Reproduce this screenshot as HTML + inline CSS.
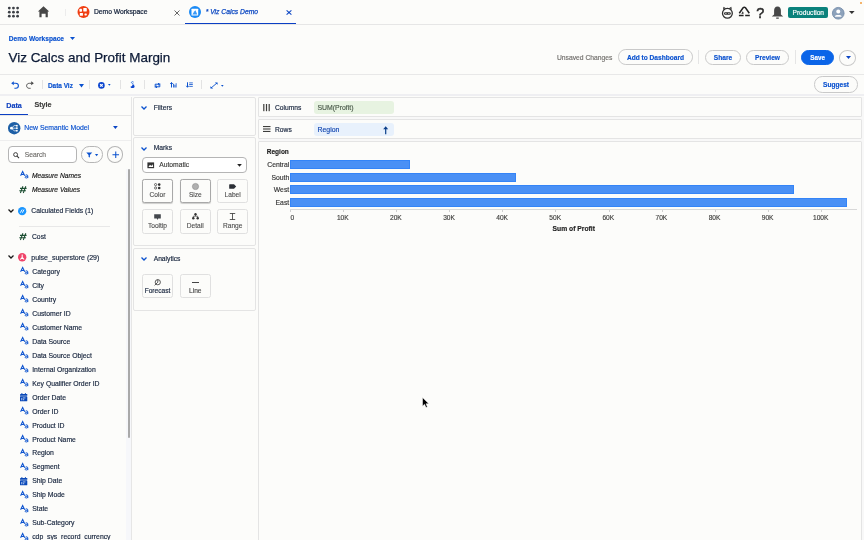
<!DOCTYPE html>
<html><head><meta charset="utf-8"><style>
html,body{margin:0;padding:0;}
body{width:864px;height:540px;overflow:hidden;position:relative;background:#fcfcfa;font-family:"Liberation Sans",sans-serif;}
.t{position:absolute;white-space:nowrap;-webkit-text-stroke:0.15px currentColor;}
#w{position:absolute;left:0;top:0;width:864px;height:540px;will-change:transform;}
svg{overflow:visible;}
</style></head><body><div id="w">
<div style="position:absolute;left:0px;top:23.5px;width:864px;height:1px;background:#e6e6e6;"></div>
<svg style="position:absolute;left:0;top:0" width="22" height="22" viewBox="0 0 22 22"><circle cx="9.30" cy="8.10" r="1.4" fill="#3b3f45"/><circle cx="9.30" cy="12.15" r="1.4" fill="#3b3f45"/><circle cx="9.30" cy="16.20" r="1.4" fill="#3b3f45"/><circle cx="13.45" cy="8.10" r="1.4" fill="#3b3f45"/><circle cx="13.45" cy="12.15" r="1.4" fill="#3b3f45"/><circle cx="13.45" cy="16.20" r="1.4" fill="#3b3f45"/><circle cx="17.60" cy="8.10" r="1.4" fill="#3b3f45"/><circle cx="17.60" cy="12.15" r="1.4" fill="#3b3f45"/><circle cx="17.60" cy="16.20" r="1.4" fill="#3b3f45"/></svg>
<svg style="position:absolute;left:37.5px;top:6.3px" width="12" height="12" viewBox="0 0 12 12"><path d="M5.5 0.3 L11.2 5.6 L9.8 5.6 L9.8 11.2 L7.6 11.2 L7.6 7.8 L3.6 7.8 L3.6 11.2 L1.4 11.2 L1.4 5.6 L-0.1 5.6 Z" fill="#474747"/></svg>
<div style="position:absolute;left:64.5px;top:8.5px;width:0.6px;height:7px;background:#ececec;"></div>
<svg style="position:absolute;left:77px;top:6px" width="13" height="12" viewBox="0 0 13 12"><circle cx="6.5" cy="6" r="6" fill="#f03e12"/><rect x="2.4" y="2.7" width="2.6" height="3" rx="0.7" fill="#fff"/><rect x="6.3" y="2.1" width="3.5" height="3.3" rx="0.4" fill="#fff"/><rect x="2.8" y="7" width="3.1" height="2.7" rx="0.3" fill="#fff"/><rect x="7.5" y="7.4" width="2.3" height="2" rx="0.6" fill="#fff"/></svg>
<div class="t" style="left:93.90px;top:8.69px;font-size:6.75px;line-height:6.75px;font-weight:400;color:#14223b;font-style:normal;-webkit-text-stroke:0.22px #14223b;">Demo Workspace</div>
<svg style="position:absolute;left:173.5px;top:9.5px" width="6" height="6" viewBox="0 0 6 6"><path d="M0.5 0.5 L5.5 5.5 M5.5 0.5 L0.5 5.5" stroke="#555" stroke-width="0.9"/></svg>
<div style="position:absolute;left:185px;top:22.6px;width:111px;height:1.6px;background:#0b3fc4;"></div>
<svg style="position:absolute;left:188.7px;top:6.2px" width="12" height="12" viewBox="0 0 12 12"><circle cx="6" cy="6" r="6" fill="#1a8af5"/><rect x="2.5" y="2.8" width="6.7" height="6.7" rx="0.5" fill="#fff"/><path d="M3.4 8.4 L5.2 5.6 L6.4 4.3 L8.3 8.4 Z" fill="#3b9af7"/></svg>
<div class="t" style="left:205.70px;top:8.69px;font-size:6.75px;line-height:6.75px;font-weight:400;color:#0d49c2;font-style:italic;-webkit-text-stroke:0.25px #0d49c2;">* Viz Calcs Demo</div>
<svg style="position:absolute;left:285.5px;top:10px" width="6" height="5" viewBox="0 0 6 5"><path d="M0.6 0.4 L5.4 4.6 M5.4 0.4 L0.6 4.6" stroke="#0b45c4" stroke-width="1.1"/></svg>
<svg style="position:absolute;left:721px;top:6px" width="13" height="13" viewBox="0 0 13 13"><circle cx="6.4" cy="7.3" r="4.9" fill="none" stroke="#2e2e2e" stroke-width="1.3"/><path d="M2.6 3.6 L2.9 1.6 L4.6 2.6 M10.2 3.6 L9.9 1.6 L8.2 2.6" stroke="#2e2e2e" stroke-width="1.1" fill="none"/><rect x="3" y="6.3" width="6.8" height="2.4" rx="1.2" fill="#2e2e2e"/><circle cx="4.9" cy="7.5" r="0.6" fill="#fff"/><circle cx="7.9" cy="7.5" r="0.6" fill="#fff"/></svg>
<svg style="position:absolute;left:738px;top:6px" width="13" height="12" viewBox="0 0 13 12"><path d="M1.3 7.2 L5.1 1.8 Q6.3 0.5 7.5 1.8 L11.3 7.2" stroke="#222" stroke-width="1.5" fill="none"/><path d="M0.9 9.6 L5.6 9.6 M7.2 9.6 L11.8 9.6" stroke="#222" stroke-width="1.5" fill="none"/><path d="M3.4 8 L4.8 5.2 L5.8 7.6 Z" fill="#222"/></svg>
<div class="t" style="left:756.20px;top:6.13px;font-size:14.5px;line-height:14.5px;font-weight:400;color:#2e2e2e;font-style:normal;-webkit-text-stroke:0.5px #2e2e2e;">?</div>
<svg style="position:absolute;left:771px;top:6px" width="13" height="13" viewBox="0 0 13 13"><path d="M6.5 0.6 C8.9 0.6 9.9 2.4 9.9 4.6 L9.9 8.6 L12.2 10.6 L0.8 10.6 L3.1 8.6 L3.1 4.6 C3.1 2.4 4.1 0.6 6.5 0.6 Z" fill="#474747"/><rect x="5" y="11.4" width="3" height="1.3" rx="0.65" fill="#474747"/></svg>
<div style="position:absolute;left:788px;top:6.6px;width:40.2px;height:11.3px;background:#0b827c;border-radius:2px;"></div>
<div class="t" style="left:792.50px;top:9.91px;font-size:6.6px;line-height:6.6px;font-weight:400;color:#fff;font-style:normal;">Production</div>
<svg style="position:absolute;left:832px;top:7px" width="12.5" height="12.5" viewBox="0 0 12 12"><circle cx="6" cy="6" r="5.6" fill="#8da2bb" stroke="#6f88a6" stroke-width="0.8"/><circle cx="6" cy="4.3" r="1.9" fill="#fff"/><path d="M2.8 9 C2.8 7.1 9.2 7.1 9.2 9 L9.2 9.4 L2.8 9.4 Z" fill="#fff"/></svg>
<svg style="position:absolute;left:849.2px;top:11.2px" width="5.6" height="3" viewBox="0 0 6 3"><path d="M0 0 L6 0 L3 3 Z" fill="#333"/></svg>
<div style="position:absolute;left:860px;top:1.5px;width:2px;height:2px;background:#f39c3c;border-radius:50%;"></div>
<div class="t" style="left:8.75px;top:35.81px;font-size:6.6px;line-height:6.6px;font-weight:700;color:#0b52cf;font-style:normal;">Demo Workspace</div>
<svg style="position:absolute;left:69.6px;top:37.2px" width="5" height="3" viewBox="0 0 5 3"><path d="M0 0 L5 0 L2.5 3 Z" fill="#0b52cf"/></svg>
<div class="t" style="left:8.50px;top:50.81px;font-size:13.45px;line-height:13.45px;font-weight:400;color:#0c1a36;font-style:normal;-webkit-text-stroke:0.25px #0c1a36;">Viz Calcs and Profit Margin</div>
<div class="t" style="left:556.90px;top:54.99px;font-size:6.75px;line-height:6.75px;font-weight:400;color:#706e6b;font-style:normal;">Unsaved Changes</div>
<div style="position:absolute;left:618px;top:49.3px;width:74.7px;height:15.6px;box-sizing:border-box;border:0.8px solid #c9c9c9;border-radius:7.8px;background:transparent;"></div>
<div class="t" style="left:626.90px;top:55.11px;font-size:6.6px;line-height:6.6px;font-weight:700;color:#0b52cf;font-style:normal;">Add to Dashboard</div>
<div style="position:absolute;left:698.3px;top:50px;width:0.7px;height:14px;background:#e5e5e5;"></div>
<div style="position:absolute;left:704.7px;top:49.5px;width:36px;height:15.7px;box-sizing:border-box;border:0.8px solid #c9c9c9;border-radius:7.85px;background:transparent;"></div>
<div class="t" style="left:713.80px;top:55.11px;font-size:6.6px;line-height:6.6px;font-weight:700;color:#0b52cf;font-style:normal;">Share</div>
<div style="position:absolute;left:746.4px;top:49.5px;width:42.3px;height:15.7px;box-sizing:border-box;border:0.8px solid #c9c9c9;border-radius:7.85px;background:transparent;"></div>
<div class="t" style="left:755.00px;top:55.11px;font-size:6.6px;line-height:6.6px;font-weight:700;color:#0b52cf;font-style:normal;">Preview</div>
<div style="position:absolute;left:794.5px;top:50px;width:0.7px;height:14px;background:#e5e5e5;"></div>
<div style="position:absolute;left:801.2px;top:49.5px;width:32.4px;height:15.7px;box-sizing:border-box;border:0.8px solid #0b65e8;border-radius:7.85px;background:#0b65e8;"></div>
<div class="t" style="left:810.20px;top:55.37px;font-size:6.3px;line-height:6.3px;font-weight:700;color:#fff;font-style:normal;">Save</div>
<div style="position:absolute;left:839.4px;top:50px;width:16.7px;height:15.5px;box-sizing:border-box;border:0.8px solid #c9c9c9;border-radius:50%;"></div>
<svg style="position:absolute;left:845.6px;top:56px" width="5" height="3" viewBox="0 0 5 3"><path d="M0 0 L5 0 L2.5 3 Z" fill="#0b45c4"/></svg>
<div style="position:absolute;left:0px;top:74.3px;width:864px;height:0.8px;background:#e8e8e8;"></div>
<div style="position:absolute;left:0px;top:93.8px;width:864px;height:2.4px;background:#efeff2;"></div>
<svg style="position:absolute;left:10.6px;top:81.2px" width="8" height="8" viewBox="0 0 8 8"><path d="M0.2 2.3 L2.8 0.3 L2.8 4.3 Z" fill="#0b52cf"/><path d="M2.4 2.3 L4.6 2.3 C6.4 2.3 7.4 3.4 7.4 4.8 C7.4 6.2 6.4 7.3 4.8 7.3 L3.4 7.3" stroke="#0b52cf" stroke-width="1.1" fill="none"/></svg>
<svg style="position:absolute;left:26.4px;top:81.2px" width="8" height="8" viewBox="0 0 8 8"><path d="M7.8 2.3 L5.2 0.3 L5.2 4.3 Z" fill="#444"/><path d="M5.6 2.3 L3.4 2.3 C1.6 2.3 0.6 3.4 0.6 4.8 C0.6 6.2 1.6 7.3 3.2 7.3 L4.6 7.3" stroke="#555" stroke-width="1" fill="none"/></svg>
<div style="position:absolute;left:42.2px;top:79.7px;width:0.6px;height:9.7px;background:#e3e3e3;"></div>
<div class="t" style="left:47.90px;top:82.93px;font-size:6.46px;line-height:6.46px;font-weight:700;color:#0b52cf;font-style:normal;">Data Viz</div>
<svg style="position:absolute;left:79.2px;top:83.6px" width="5" height="3.4" viewBox="0 0 5 3.4"><path d="M0 0 L5 0 L2.5 3.4 Z" fill="#0b52cf"/></svg>
<div style="position:absolute;left:89.4px;top:79.7px;width:0.6px;height:9.7px;background:#e3e3e3;"></div>
<svg style="position:absolute;left:98.3px;top:82.2px" width="6.8" height="6.8" viewBox="0 0 6.8 6.8"><circle cx="3.4" cy="3.4" r="3.3" fill="#0b45d0"/><path d="M2.1 2.1 L4.7 4.7 M4.7 2.1 L2.1 4.7" stroke="#fff" stroke-width="1.2"/></svg>
<svg style="position:absolute;left:108.4px;top:84.3px" width="2.6" height="1.8" viewBox="0 0 3 2"><path d="M0 0 L3 0 L1.5 2 Z" fill="#0b52cf"/></svg>
<div style="position:absolute;left:119.6px;top:79.7px;width:0.6px;height:9.7px;background:#e3e3e3;"></div>
<svg style="position:absolute;left:129.8px;top:81px" width="5" height="7.2" viewBox="0 0 5 7.2"><path d="M3.6 1.2 C3.2 0.4 1.4 0.5 1.4 1.5 C1.4 2.6 3.6 2.4 3.6 3.5" stroke="#3a7ae0" stroke-width="1" fill="none"/><path d="M2.2 3.6 C3.6 3.6 4.6 4.4 4.6 5.6 C4.6 6.8 3.6 7.1 2.4 7.1 C1.2 7.1 0.4 6.6 0.6 5.8 C1 5 2 5.6 2.2 4.8 Z" fill="#0b45d0"/></svg>
<div style="position:absolute;left:144.4px;top:79.7px;width:0.6px;height:9.7px;background:#e3e3e3;"></div>
<svg style="position:absolute;left:153.5px;top:82.5px" width="7" height="5" viewBox="0 0 7 5"><path d="M1.2 4.5 L1.2 1.2 L5 1.2 M4 0.2 L5.5 1.2 L4 2.2" stroke="#0b52cf" stroke-width="1" fill="none"/><path d="M5.8 0.5 L5.8 3.8 L2 3.8 M3 2.8 L1.5 3.8 L3 4.8" stroke="#0b52cf" stroke-width="1" fill="none"/></svg>
<svg style="position:absolute;left:170px;top:82.3px" width="6.5" height="5.5" viewBox="0 0 6.5 5.5"><path d="M1.5 5.5 L1.5 0.8 M0.3 2 L1.5 0.5 L2.7 2" stroke="#0b52cf" stroke-width="1" fill="none"/><rect x="3.2" y="1.8" width="0.9" height="3.7" fill="#0b52cf"/><rect x="4.5" y="2.8" width="0.9" height="2.7" fill="#0b52cf"/><rect x="5.7" y="1.2" width="0.8" height="4.3" fill="#0b52cf"/></svg>
<svg style="position:absolute;left:186px;top:82px" width="7" height="6" viewBox="0 0 7 6"><path d="M1.5 0.3 L1.5 5 M0.3 3.8 L1.5 5.3 L2.7 3.8" stroke="#0b52cf" stroke-width="1" fill="none"/><rect x="3.2" y="0.5" width="3.6" height="0.8" fill="#0b52cf"/><rect x="3.2" y="2.2" width="3.6" height="0.8" fill="#0b52cf"/><rect x="3.2" y="3.9" width="3.6" height="0.8" fill="#0b52cf"/></svg>
<div style="position:absolute;left:201.3px;top:79.7px;width:0.6px;height:9.7px;background:#e3e3e3;"></div>
<svg style="position:absolute;left:210px;top:82px" width="8" height="7" viewBox="0 0 8 7"><path d="M1 6 L7 1" stroke="#0b52cf" stroke-width="0.9"/><path d="M4.8 0.4 L7.6 0.4 L7.6 2.8 Z M0.4 4.2 L0.4 6.6 L3.2 6.6 Z" fill="#0b52cf"/></svg>
<svg style="position:absolute;left:220.5px;top:84.5px" width="2.6" height="1.8" viewBox="0 0 3 2"><path d="M0 0 L3 0 L1.5 2 Z" fill="#0b52cf"/></svg>
<div style="position:absolute;left:814.2px;top:76.2px;width:43.9px;height:16.5px;box-sizing:border-box;border:0.8px solid #c9c9c9;border-radius:8.25px;background:transparent;"></div>
<div class="t" style="left:823.00px;top:81.91px;font-size:6.6px;line-height:6.6px;font-weight:700;color:#0b52cf;font-style:normal;">Suggest</div>
<div style="position:absolute;left:0px;top:96.6px;width:131.2px;height:444px;background:#fcfcfa;"></div>
<div style="position:absolute;left:131.2px;top:96.6px;width:0.8px;height:444px;background:#e6e6e6;"></div>
<div class="t" style="left:6.20px;top:101.81px;font-size:7.2px;line-height:7.2px;font-weight:700;color:#0d3fbf;font-style:normal;">Data</div>
<div class="t" style="left:34.40px;top:101.85px;font-size:7.15px;line-height:7.15px;font-weight:700;color:#3e3e3c;font-style:normal;">Style</div>
<div style="position:absolute;left:0px;top:114.8px;width:131.2px;height:0.7px;background:#e6e6e6;"></div>
<div style="position:absolute;left:0px;top:113.6px;width:28px;height:1.9px;background:#0b3fc4;"></div>
<svg style="position:absolute;left:8px;top:121.5px" width="12.4" height="12.4" viewBox="0 0 12 12"><circle cx="6" cy="6" r="6" fill="#1d5fa6"/><circle cx="3.3" cy="6" r="1.3" fill="#fff"/><path d="M3.3 6 L6 3.5 L8.6 3.5 M3.3 6 L8.6 6 M3.3 6 L6 8.5 L8.6 8.5" stroke="#fff" stroke-width="0.7" fill="none"/><rect x="7.8" y="2.8" width="1.6" height="1.6" fill="#fff"/><rect x="7.8" y="5.2" width="1.6" height="1.6" fill="#fff"/><rect x="7.8" y="7.6" width="1.6" height="1.6" fill="#fff"/></svg>
<div class="t" style="left:24.30px;top:125.19px;font-size:6.86px;line-height:6.86px;font-weight:400;color:#0b52cf;font-style:normal;">New Semantic Model</div>
<svg style="position:absolute;left:113px;top:126.4px" width="4.8" height="3" viewBox="0 0 5 3"><path d="M0 0 L5 0 L2.5 3 Z" fill="#0b45c4"/></svg>
<div style="position:absolute;left:0px;top:140px;width:131.2px;height:0.7px;background:#eeeeee;"></div>
<div style="position:absolute;left:8.1px;top:146.2px;width:68.8px;height:16.5px;box-sizing:border-box;border:0.8px solid #b5b5b5;border-radius:4px;background:#fff;"></div>
<svg style="position:absolute;left:12.5px;top:151.5px" width="6.5" height="6.5" viewBox="0 0 7 7"><circle cx="2.8" cy="2.8" r="2.1" stroke="#333" stroke-width="1" fill="none"/><path d="M4.4 4.4 L6.5 6.5" stroke="#333" stroke-width="1.1"/></svg>
<div class="t" style="left:24.70px;top:152.09px;font-size:6.75px;line-height:6.75px;font-weight:400;color:#706e6b;font-style:normal;">Search</div>
<div style="position:absolute;left:80.9px;top:146.2px;width:21.9px;height:16.5px;box-sizing:border-box;border:0.8px solid #b5b5b5;border-radius:8.25px;"></div>
<svg style="position:absolute;left:86px;top:151.5px" width="6.5" height="6" viewBox="0 0 7 6"><path d="M0.3 0.3 L6.7 0.3 L4.2 3 L4.2 5.8 L2.8 5.2 L2.8 3 Z" fill="#0b52cf"/></svg>
<svg style="position:absolute;left:95.2px;top:153.6px" width="3.2" height="2.2" viewBox="0 0 3 2"><path d="M0 0 L3 0 L1.5 2 Z" fill="#0b52cf"/></svg>
<div style="position:absolute;left:107px;top:146.2px;width:16.4px;height:16.5px;box-sizing:border-box;border:0.8px solid #b5b5b5;border-radius:50%;"></div>
<svg style="position:absolute;left:111.5px;top:150.7px" width="7.5" height="7.5" viewBox="0 0 8 8"><path d="M4 0.5 L4 7.5 M0.5 4 L7.5 4" stroke="#0b52cf" stroke-width="1.1"/></svg>
<div style="position:absolute;left:126.4px;top:169px;width:5px;height:372px;background:#f6f7fa;"></div>
<div style="position:absolute;left:127.6px;top:169.3px;width:2.7px;height:268.5px;background:#a9a9a9;border-radius:1.3px;"></div>
<svg style="position:absolute;left:19.50px;top:170.80px" width="9" height="8" viewBox="0 0 9 8"><path d="M0.6 4.8 L2.65 0.5 L4.7 4.8 M1.3 3.5 L4 3.5" stroke="#0b52cf" stroke-width="1.05" fill="none"/><path d="M5.4 4.3 C5.9 3.6 7.8 3.5 7.8 5 L7.8 7.1 M7.7 5.5 C7.2 5.2 5.1 5.2 5.1 6.2 C5.1 7.3 7.2 7.2 7.8 6.3" stroke="#0b52cf" stroke-width="0.95" fill="none"/></svg>
<div class="t" style="left:32.00px;top:173.13px;font-size:6.7px;line-height:6.7px;font-weight:400;color:#181818;font-style:italic;">Measure Names</div>
<svg style="position:absolute;left:19.4px;top:185.7px" width="8" height="7.2" viewBox="0 0 8 7.2"><path d="M3.9 0.2 L1.4 7 M6.8 0.2 L4.3 7 M1 2.4 L7.6 2.4 M0.3 4.8 L6.9 4.8" stroke="#1d4f33" stroke-width="1.05" fill="none"/></svg>
<div class="t" style="left:32.00px;top:187.13px;font-size:6.7px;line-height:6.7px;font-weight:400;color:#181818;font-style:italic;">Measure Values</div>
<svg style="position:absolute;left:8.0px;top:208.8px" width="6" height="3.6" viewBox="0 0 6 3.6"><path d="M0.5 0.5 L3 3 L5.5 0.5" stroke="#181818" stroke-width="1.25" fill="none"/></svg>
<svg style="position:absolute;left:18.4px;top:206.7px" width="8.3" height="8.3" viewBox="0 0 8 8"><circle cx="4" cy="4" r="4" fill="#1b96ff"/><path d="M2.2 5.5 L4 2.5 M4.2 5.5 L5.8 2.5" stroke="#fff" stroke-width="0.9"/></svg>
<div class="t" style="left:31.25px;top:208.16px;font-size:6.78px;line-height:6.78px;font-weight:400;color:#14223b;font-style:normal;">Calculated Fields (1)</div>
<div style="position:absolute;left:19px;top:226px;width:91px;height:0.6px;background:#e8e8e8;"></div>
<svg style="position:absolute;left:19.4px;top:232.7px" width="8" height="7.2" viewBox="0 0 8 7.2"><path d="M3.9 0.2 L1.4 7 M6.8 0.2 L4.3 7 M1 2.4 L7.6 2.4 M0.3 4.8 L6.9 4.8" stroke="#1d4f33" stroke-width="1.05" fill="none"/></svg>
<div class="t" style="left:32.00px;top:233.59px;font-size:6.75px;line-height:6.75px;font-weight:400;color:#14223b;font-style:normal;">Cost</div>
<svg style="position:absolute;left:8.0px;top:255.2px" width="6" height="3.6" viewBox="0 0 6 3.6"><path d="M0.5 0.5 L3 3 L5.5 0.5" stroke="#181818" stroke-width="1.25" fill="none"/></svg>
<svg style="position:absolute;left:18.4px;top:252.8px" width="8.4" height="8.4" viewBox="0 0 8 8"><circle cx="4" cy="4" r="4" fill="#f0456a"/><path d="M4 1.5 L4 4.2 L2.2 6.2 M4 4.2 L5.8 6.2" stroke="#fff" stroke-width="1" fill="none"/></svg>
<div class="t" style="left:31.25px;top:254.37px;font-size:7.0px;line-height:7.0px;font-weight:400;color:#14223b;font-style:normal;">pulse_superstore (29)</div>
<svg style="position:absolute;left:19.60px;top:267.30px" width="9" height="8" viewBox="0 0 9 8"><path d="M0.6 4.8 L2.65 0.5 L4.7 4.8 M1.3 3.5 L4 3.5" stroke="#0b52cf" stroke-width="1.05" fill="none"/><path d="M5.4 4.3 C5.9 3.6 7.8 3.5 7.8 5 L7.8 7.1 M7.7 5.5 C7.2 5.2 5.1 5.2 5.1 6.2 C5.1 7.3 7.2 7.2 7.8 6.3" stroke="#0b52cf" stroke-width="0.95" fill="none"/></svg>
<div class="t" style="left:32.20px;top:269.00px;font-size:6.85px;line-height:6.85px;font-weight:400;color:#14223b;font-style:normal;">Category</div>
<svg style="position:absolute;left:19.60px;top:281.26px" width="9" height="8" viewBox="0 0 9 8"><path d="M0.6 4.8 L2.65 0.5 L4.7 4.8 M1.3 3.5 L4 3.5" stroke="#0b52cf" stroke-width="1.05" fill="none"/><path d="M5.4 4.3 C5.9 3.6 7.8 3.5 7.8 5 L7.8 7.1 M7.7 5.5 C7.2 5.2 5.1 5.2 5.1 6.2 C5.1 7.3 7.2 7.2 7.8 6.3" stroke="#0b52cf" stroke-width="0.95" fill="none"/></svg>
<div class="t" style="left:32.20px;top:282.96px;font-size:6.85px;line-height:6.85px;font-weight:400;color:#14223b;font-style:normal;">City</div>
<svg style="position:absolute;left:19.60px;top:295.22px" width="9" height="8" viewBox="0 0 9 8"><path d="M0.6 4.8 L2.65 0.5 L4.7 4.8 M1.3 3.5 L4 3.5" stroke="#0b52cf" stroke-width="1.05" fill="none"/><path d="M5.4 4.3 C5.9 3.6 7.8 3.5 7.8 5 L7.8 7.1 M7.7 5.5 C7.2 5.2 5.1 5.2 5.1 6.2 C5.1 7.3 7.2 7.2 7.8 6.3" stroke="#0b52cf" stroke-width="0.95" fill="none"/></svg>
<div class="t" style="left:32.20px;top:296.92px;font-size:6.85px;line-height:6.85px;font-weight:400;color:#14223b;font-style:normal;">Country</div>
<svg style="position:absolute;left:19.60px;top:309.18px" width="9" height="8" viewBox="0 0 9 8"><path d="M0.6 4.8 L2.65 0.5 L4.7 4.8 M1.3 3.5 L4 3.5" stroke="#0b52cf" stroke-width="1.05" fill="none"/><path d="M5.4 4.3 C5.9 3.6 7.8 3.5 7.8 5 L7.8 7.1 M7.7 5.5 C7.2 5.2 5.1 5.2 5.1 6.2 C5.1 7.3 7.2 7.2 7.8 6.3" stroke="#0b52cf" stroke-width="0.95" fill="none"/></svg>
<div class="t" style="left:32.20px;top:310.88px;font-size:6.85px;line-height:6.85px;font-weight:400;color:#14223b;font-style:normal;">Customer ID</div>
<svg style="position:absolute;left:19.60px;top:323.14px" width="9" height="8" viewBox="0 0 9 8"><path d="M0.6 4.8 L2.65 0.5 L4.7 4.8 M1.3 3.5 L4 3.5" stroke="#0b52cf" stroke-width="1.05" fill="none"/><path d="M5.4 4.3 C5.9 3.6 7.8 3.5 7.8 5 L7.8 7.1 M7.7 5.5 C7.2 5.2 5.1 5.2 5.1 6.2 C5.1 7.3 7.2 7.2 7.8 6.3" stroke="#0b52cf" stroke-width="0.95" fill="none"/></svg>
<div class="t" style="left:32.20px;top:324.84px;font-size:6.85px;line-height:6.85px;font-weight:400;color:#14223b;font-style:normal;">Customer Name</div>
<svg style="position:absolute;left:19.60px;top:337.10px" width="9" height="8" viewBox="0 0 9 8"><path d="M0.6 4.8 L2.65 0.5 L4.7 4.8 M1.3 3.5 L4 3.5" stroke="#0b52cf" stroke-width="1.05" fill="none"/><path d="M5.4 4.3 C5.9 3.6 7.8 3.5 7.8 5 L7.8 7.1 M7.7 5.5 C7.2 5.2 5.1 5.2 5.1 6.2 C5.1 7.3 7.2 7.2 7.8 6.3" stroke="#0b52cf" stroke-width="0.95" fill="none"/></svg>
<div class="t" style="left:32.20px;top:338.80px;font-size:6.85px;line-height:6.85px;font-weight:400;color:#14223b;font-style:normal;">Data Source</div>
<svg style="position:absolute;left:19.60px;top:351.06px" width="9" height="8" viewBox="0 0 9 8"><path d="M0.6 4.8 L2.65 0.5 L4.7 4.8 M1.3 3.5 L4 3.5" stroke="#0b52cf" stroke-width="1.05" fill="none"/><path d="M5.4 4.3 C5.9 3.6 7.8 3.5 7.8 5 L7.8 7.1 M7.7 5.5 C7.2 5.2 5.1 5.2 5.1 6.2 C5.1 7.3 7.2 7.2 7.8 6.3" stroke="#0b52cf" stroke-width="0.95" fill="none"/></svg>
<div class="t" style="left:32.20px;top:352.76px;font-size:6.85px;line-height:6.85px;font-weight:400;color:#14223b;font-style:normal;">Data Source Object</div>
<svg style="position:absolute;left:19.60px;top:365.02px" width="9" height="8" viewBox="0 0 9 8"><path d="M0.6 4.8 L2.65 0.5 L4.7 4.8 M1.3 3.5 L4 3.5" stroke="#0b52cf" stroke-width="1.05" fill="none"/><path d="M5.4 4.3 C5.9 3.6 7.8 3.5 7.8 5 L7.8 7.1 M7.7 5.5 C7.2 5.2 5.1 5.2 5.1 6.2 C5.1 7.3 7.2 7.2 7.8 6.3" stroke="#0b52cf" stroke-width="0.95" fill="none"/></svg>
<div class="t" style="left:32.20px;top:366.72px;font-size:6.85px;line-height:6.85px;font-weight:400;color:#14223b;font-style:normal;">Internal Organization</div>
<svg style="position:absolute;left:19.60px;top:378.98px" width="9" height="8" viewBox="0 0 9 8"><path d="M0.6 4.8 L2.65 0.5 L4.7 4.8 M1.3 3.5 L4 3.5" stroke="#0b52cf" stroke-width="1.05" fill="none"/><path d="M5.4 4.3 C5.9 3.6 7.8 3.5 7.8 5 L7.8 7.1 M7.7 5.5 C7.2 5.2 5.1 5.2 5.1 6.2 C5.1 7.3 7.2 7.2 7.8 6.3" stroke="#0b52cf" stroke-width="0.95" fill="none"/></svg>
<div class="t" style="left:32.20px;top:380.68px;font-size:6.85px;line-height:6.85px;font-weight:400;color:#14223b;font-style:normal;">Key Qualifier Order ID</div>
<svg style="position:absolute;left:19.80px;top:392.74px" width="7.4" height="8.4" viewBox="0 0 7.4 8.4"><rect x="0" y="1.1" width="7.3" height="1.7" rx="0.4" fill="#0b49b8"/><rect x="0" y="3.3" width="7.3" height="5" rx="0.6" fill="#0b49b8"/><rect x="1.3" y="0.2" width="1.1" height="1" fill="#0b49b8"/><rect x="4.9" y="0.2" width="1.1" height="1" fill="#0b49b8"/><rect x="1.3" y="4.9" width="1" height="2.4" fill="#b8cdf0"/><rect x="2.9" y="4.5" width="2.6" height="0.9" fill="#b8cdf0"/><rect x="3.2" y="5.8" width="1" height="1.5" fill="#b8cdf0"/></svg>
<div class="t" style="left:32.20px;top:394.64px;font-size:6.85px;line-height:6.85px;font-weight:400;color:#14223b;font-style:normal;">Order Date</div>
<svg style="position:absolute;left:19.60px;top:406.90px" width="9" height="8" viewBox="0 0 9 8"><path d="M0.6 4.8 L2.65 0.5 L4.7 4.8 M1.3 3.5 L4 3.5" stroke="#0b52cf" stroke-width="1.05" fill="none"/><path d="M5.4 4.3 C5.9 3.6 7.8 3.5 7.8 5 L7.8 7.1 M7.7 5.5 C7.2 5.2 5.1 5.2 5.1 6.2 C5.1 7.3 7.2 7.2 7.8 6.3" stroke="#0b52cf" stroke-width="0.95" fill="none"/></svg>
<div class="t" style="left:32.20px;top:408.60px;font-size:6.85px;line-height:6.85px;font-weight:400;color:#14223b;font-style:normal;">Order ID</div>
<svg style="position:absolute;left:19.60px;top:420.86px" width="9" height="8" viewBox="0 0 9 8"><path d="M0.6 4.8 L2.65 0.5 L4.7 4.8 M1.3 3.5 L4 3.5" stroke="#0b52cf" stroke-width="1.05" fill="none"/><path d="M5.4 4.3 C5.9 3.6 7.8 3.5 7.8 5 L7.8 7.1 M7.7 5.5 C7.2 5.2 5.1 5.2 5.1 6.2 C5.1 7.3 7.2 7.2 7.8 6.3" stroke="#0b52cf" stroke-width="0.95" fill="none"/></svg>
<div class="t" style="left:32.20px;top:422.56px;font-size:6.85px;line-height:6.85px;font-weight:400;color:#14223b;font-style:normal;">Product ID</div>
<svg style="position:absolute;left:19.60px;top:434.82px" width="9" height="8" viewBox="0 0 9 8"><path d="M0.6 4.8 L2.65 0.5 L4.7 4.8 M1.3 3.5 L4 3.5" stroke="#0b52cf" stroke-width="1.05" fill="none"/><path d="M5.4 4.3 C5.9 3.6 7.8 3.5 7.8 5 L7.8 7.1 M7.7 5.5 C7.2 5.2 5.1 5.2 5.1 6.2 C5.1 7.3 7.2 7.2 7.8 6.3" stroke="#0b52cf" stroke-width="0.95" fill="none"/></svg>
<div class="t" style="left:32.20px;top:436.52px;font-size:6.85px;line-height:6.85px;font-weight:400;color:#14223b;font-style:normal;">Product Name</div>
<svg style="position:absolute;left:19.60px;top:448.78px" width="9" height="8" viewBox="0 0 9 8"><path d="M0.6 4.8 L2.65 0.5 L4.7 4.8 M1.3 3.5 L4 3.5" stroke="#0b52cf" stroke-width="1.05" fill="none"/><path d="M5.4 4.3 C5.9 3.6 7.8 3.5 7.8 5 L7.8 7.1 M7.7 5.5 C7.2 5.2 5.1 5.2 5.1 6.2 C5.1 7.3 7.2 7.2 7.8 6.3" stroke="#0b52cf" stroke-width="0.95" fill="none"/></svg>
<div class="t" style="left:32.20px;top:450.48px;font-size:6.85px;line-height:6.85px;font-weight:400;color:#14223b;font-style:normal;">Region</div>
<svg style="position:absolute;left:19.60px;top:462.74px" width="9" height="8" viewBox="0 0 9 8"><path d="M0.6 4.8 L2.65 0.5 L4.7 4.8 M1.3 3.5 L4 3.5" stroke="#0b52cf" stroke-width="1.05" fill="none"/><path d="M5.4 4.3 C5.9 3.6 7.8 3.5 7.8 5 L7.8 7.1 M7.7 5.5 C7.2 5.2 5.1 5.2 5.1 6.2 C5.1 7.3 7.2 7.2 7.8 6.3" stroke="#0b52cf" stroke-width="0.95" fill="none"/></svg>
<div class="t" style="left:32.20px;top:464.44px;font-size:6.85px;line-height:6.85px;font-weight:400;color:#14223b;font-style:normal;">Segment</div>
<svg style="position:absolute;left:19.80px;top:476.50px" width="7.4" height="8.4" viewBox="0 0 7.4 8.4"><rect x="0" y="1.1" width="7.3" height="1.7" rx="0.4" fill="#0b49b8"/><rect x="0" y="3.3" width="7.3" height="5" rx="0.6" fill="#0b49b8"/><rect x="1.3" y="0.2" width="1.1" height="1" fill="#0b49b8"/><rect x="4.9" y="0.2" width="1.1" height="1" fill="#0b49b8"/><rect x="1.3" y="4.9" width="1" height="2.4" fill="#b8cdf0"/><rect x="2.9" y="4.5" width="2.6" height="0.9" fill="#b8cdf0"/><rect x="3.2" y="5.8" width="1" height="1.5" fill="#b8cdf0"/></svg>
<div class="t" style="left:32.20px;top:478.40px;font-size:6.85px;line-height:6.85px;font-weight:400;color:#14223b;font-style:normal;">Ship Date</div>
<svg style="position:absolute;left:19.60px;top:490.66px" width="9" height="8" viewBox="0 0 9 8"><path d="M0.6 4.8 L2.65 0.5 L4.7 4.8 M1.3 3.5 L4 3.5" stroke="#0b52cf" stroke-width="1.05" fill="none"/><path d="M5.4 4.3 C5.9 3.6 7.8 3.5 7.8 5 L7.8 7.1 M7.7 5.5 C7.2 5.2 5.1 5.2 5.1 6.2 C5.1 7.3 7.2 7.2 7.8 6.3" stroke="#0b52cf" stroke-width="0.95" fill="none"/></svg>
<div class="t" style="left:32.20px;top:492.36px;font-size:6.85px;line-height:6.85px;font-weight:400;color:#14223b;font-style:normal;">Ship Mode</div>
<svg style="position:absolute;left:19.60px;top:504.62px" width="9" height="8" viewBox="0 0 9 8"><path d="M0.6 4.8 L2.65 0.5 L4.7 4.8 M1.3 3.5 L4 3.5" stroke="#0b52cf" stroke-width="1.05" fill="none"/><path d="M5.4 4.3 C5.9 3.6 7.8 3.5 7.8 5 L7.8 7.1 M7.7 5.5 C7.2 5.2 5.1 5.2 5.1 6.2 C5.1 7.3 7.2 7.2 7.8 6.3" stroke="#0b52cf" stroke-width="0.95" fill="none"/></svg>
<div class="t" style="left:32.20px;top:506.32px;font-size:6.85px;line-height:6.85px;font-weight:400;color:#14223b;font-style:normal;">State</div>
<svg style="position:absolute;left:19.60px;top:518.58px" width="9" height="8" viewBox="0 0 9 8"><path d="M0.6 4.8 L2.65 0.5 L4.7 4.8 M1.3 3.5 L4 3.5" stroke="#0b52cf" stroke-width="1.05" fill="none"/><path d="M5.4 4.3 C5.9 3.6 7.8 3.5 7.8 5 L7.8 7.1 M7.7 5.5 C7.2 5.2 5.1 5.2 5.1 6.2 C5.1 7.3 7.2 7.2 7.8 6.3" stroke="#0b52cf" stroke-width="0.95" fill="none"/></svg>
<div class="t" style="left:32.20px;top:520.28px;font-size:6.85px;line-height:6.85px;font-weight:400;color:#14223b;font-style:normal;">Sub-Category</div>
<svg style="position:absolute;left:19.60px;top:532.54px" width="9" height="8" viewBox="0 0 9 8"><path d="M0.6 4.8 L2.65 0.5 L4.7 4.8 M1.3 3.5 L4 3.5" stroke="#0b52cf" stroke-width="1.05" fill="none"/><path d="M5.4 4.3 C5.9 3.6 7.8 3.5 7.8 5 L7.8 7.1 M7.7 5.5 C7.2 5.2 5.1 5.2 5.1 6.2 C5.1 7.3 7.2 7.2 7.8 6.3" stroke="#0b52cf" stroke-width="0.95" fill="none"/></svg>
<div class="t" style="left:32.20px;top:534.24px;font-size:6.85px;line-height:6.85px;font-weight:400;color:#14223b;font-style:normal;">cdp_sys_record_currency</div>
<div style="position:absolute;left:132px;top:96.6px;width:126px;height:444px;background:#fcfcfa;"></div>
<div style="position:absolute;left:133.4px;top:97px;width:123px;height:39px;box-sizing:border-box;border:0.8px solid #e4e4e4;border-radius:2px;background:#fcfcfa;"></div>
<svg style="position:absolute;left:141px;top:106.2px" width="6" height="3.6" viewBox="0 0 6 3.6"><path d="M0.5 0.5 L3 3 L5.5 0.5" stroke="#0b52cf" stroke-width="1.3" fill="none"/></svg>
<div class="t" style="left:153.80px;top:105.03px;font-size:6.7px;line-height:6.7px;font-weight:400;color:#14223b;font-style:normal;">Filters</div>
<div style="position:absolute;left:133.4px;top:137px;width:123px;height:109px;box-sizing:border-box;border:0.8px solid #e4e4e4;border-radius:2px;background:#fcfcfa;"></div>
<svg style="position:absolute;left:141px;top:146.6px" width="6" height="3.6" viewBox="0 0 6 3.6"><path d="M0.5 0.5 L3 3 L5.5 0.5" stroke="#0b52cf" stroke-width="1.3" fill="none"/></svg>
<div class="t" style="left:153.80px;top:145.13px;font-size:6.7px;line-height:6.7px;font-weight:400;color:#14223b;font-style:normal;">Marks</div>
<div style="position:absolute;left:142.2px;top:157px;width:105.3px;height:15.5px;box-sizing:border-box;border:0.8px solid #b5b5b5;border-radius:4px;background:#fff;"></div>
<svg style="position:absolute;left:146.7px;top:161.7px" width="7.5" height="6.6" viewBox="0 0 7.5 6.6"><rect x="0.4" y="0.4" width="6.7" height="5.8" fill="#333" /><path d="M1.4 5 L3 2.8 L4.4 4 L5.6 2.2 L6.2 5 Z" fill="#fff"/></svg>
<div class="t" style="left:159.20px;top:162.29px;font-size:6.74px;line-height:6.74px;font-weight:400;color:#3e3e3c;font-style:normal;">Automatic</div>
<svg style="position:absolute;left:236.7px;top:164.2px" width="5" height="2.8" viewBox="0 0 5 3"><path d="M0 0 L5 0 L2.5 3 Z" fill="#222"/></svg>
<div style="position:absolute;left:142.2px;top:178.7px;width:30.6px;height:24.5px;box-sizing:border-box;border:0.8px solid #a8a8a8;border-radius:2.5px;background:#fcfcfa;box-shadow:0 0.6px 0.8px rgba(0,0,0,0.18);"></div>
<svg style="position:absolute;left:154px;top:183.4px" width="7" height="6.6" viewBox="0 0 7 6.6"><circle cx="1.6" cy="1.6" r="1.1" stroke="#333" stroke-width="0.7" fill="none"/><circle cx="5.2" cy="1.6" r="1.3" fill="#333"/><circle cx="1.6" cy="5" r="1.1" stroke="#333" stroke-width="0.7" fill="none"/><circle cx="5.2" cy="5" r="1.3" fill="#333"/></svg>
<div class="t" style="left:142.2px;width:30.6px;text-align:center;top:192.31px;font-size:6.6px;line-height:6.6px;color:#4a4a4a;-webkit-text-stroke:0.1px #4a4a4a">Color</div>
<div style="position:absolute;left:180px;top:178.7px;width:30.6px;height:24.5px;box-sizing:border-box;border:0.8px solid #a8a8a8;border-radius:2.5px;background:#fcfcfa;box-shadow:0 0.6px 0.8px rgba(0,0,0,0.18);"></div>
<svg style="position:absolute;left:191.6px;top:183.3px" width="7" height="7" viewBox="0 0 7 7"><circle cx="3.5" cy="3.5" r="3.1" fill="#b0b0b0" stroke="#8a8a8a" stroke-width="0.6"/></svg>
<div class="t" style="left:180px;width:30.6px;text-align:center;top:192.31px;font-size:6.6px;line-height:6.6px;color:#4a4a4a;-webkit-text-stroke:0.1px #4a4a4a">Size</div>
<div style="position:absolute;left:217.4px;top:178.7px;width:30.6px;height:24.5px;box-sizing:border-box;border:0.8px solid #e0e0e0;border-radius:2.5px;background:#fcfcfa;"></div>
<svg style="position:absolute;left:228.8px;top:183.8px" width="7.4" height="5" viewBox="0 0 7.4 5"><path d="M0.8 0.2 L5 0.2 L7.2 2.5 L5 4.8 L0.8 4.8 Q0.2 4.8 0.2 4.2 L0.2 0.8 Q0.2 0.2 0.8 0.2 Z" fill="#2b2f36"/></svg>
<div class="t" style="left:217.4px;width:30.6px;text-align:center;top:192.31px;font-size:6.6px;line-height:6.6px;color:#4a4a4a;-webkit-text-stroke:0.1px #4a4a4a">Label</div>
<div style="position:absolute;left:142.2px;top:209.2px;width:30.6px;height:24.5px;box-sizing:border-box;border:0.8px solid #e0e0e0;border-radius:2.5px;background:#fcfcfa;"></div>
<svg style="position:absolute;left:154px;top:213.6px" width="7" height="6.2" viewBox="0 0 7 6.2"><path d="M0.2 0.2 L6.8 0.2 L6.8 4.6 L4.2 4.6 L3.5 6 L2.8 4.6 L0.2 4.6 Z" fill="#43474d"/></svg>
<div class="t" style="left:142.2px;width:30.6px;text-align:center;top:222.81px;font-size:6.6px;line-height:6.6px;color:#4a4a4a;-webkit-text-stroke:0.1px #4a4a4a">Tooltip</div>
<div style="position:absolute;left:180px;top:209.2px;width:30.6px;height:24.5px;box-sizing:border-box;border:0.8px solid #e0e0e0;border-radius:2.5px;background:#fcfcfa;"></div>
<svg style="position:absolute;left:191.6px;top:213.4px" width="7" height="6.6" viewBox="0 0 7 6.6"><circle cx="3.5" cy="1.3" r="1.2" fill="#333"/><circle cx="1.3" cy="5.2" r="1.2" fill="#333"/><circle cx="5.7" cy="5.2" r="1.2" fill="#333"/><path d="M3.5 1.3 L3.5 3.2 L1.3 3.2 L1.3 5.2 M3.5 3.2 L5.7 3.2 L5.7 5.2" stroke="#333" stroke-width="0.7" fill="none"/></svg>
<div class="t" style="left:180px;width:30.6px;text-align:center;top:222.81px;font-size:6.6px;line-height:6.6px;color:#4a4a4a;-webkit-text-stroke:0.1px #4a4a4a">Detail</div>
<div style="position:absolute;left:217.4px;top:209.2px;width:30.6px;height:24.5px;box-sizing:border-box;border:0.8px solid #e0e0e0;border-radius:2.5px;background:#fcfcfa;"></div>
<svg style="position:absolute;left:229.4px;top:213.2px" width="7" height="7" viewBox="0 0 7 7"><path d="M0.8 0.5 L6.2 0.5 M0.8 6.5 L6.2 6.5 M3.5 0.5 L3.5 6.5" stroke="#333" stroke-width="0.8"/></svg>
<div class="t" style="left:217.4px;width:30.6px;text-align:center;top:222.81px;font-size:6.6px;line-height:6.6px;color:#4a4a4a;-webkit-text-stroke:0.1px #4a4a4a">Range</div>
<div style="position:absolute;left:133.4px;top:248px;width:123px;height:63px;box-sizing:border-box;border:0.8px solid #e4e4e4;border-radius:2px;background:#fcfcfa;"></div>
<svg style="position:absolute;left:141px;top:256.7px" width="6" height="3.6" viewBox="0 0 6 3.6"><path d="M0.5 0.5 L3 3 L5.5 0.5" stroke="#0b52cf" stroke-width="1.3" fill="none"/></svg>
<div class="t" style="left:153.70px;top:255.73px;font-size:6.7px;line-height:6.7px;font-weight:400;color:#14223b;font-style:normal;">Analytics</div>
<div style="position:absolute;left:142.2px;top:273.7px;width:30.6px;height:24.3px;box-sizing:border-box;border:0.8px solid #e0e0e0;border-radius:2.5px;"></div>
<svg style="position:absolute;left:153.8px;top:278.6px" width="7" height="7" viewBox="0 0 7 7"><circle cx="3.8" cy="3.2" r="2.6" stroke="#333" stroke-width="0.8" fill="none"/><path d="M3.8 3.2 L3.8 0.6 M3.8 3.2 L0.6 6.4" stroke="#333" stroke-width="0.8"/></svg>
<div class="t" style="left:142.2px;width:30.6px;text-align:center;top:287.71px;font-size:6.6px;line-height:6.6px;color:#14223b">Forecast</div>
<div style="position:absolute;left:180px;top:273.7px;width:30.6px;height:24.3px;box-sizing:border-box;border:0.8px solid #e0e0e0;border-radius:2.5px;"></div>
<div style="position:absolute;left:191.5px;top:282px;width:7px;height:1px;background:#444;"></div>
<div class="t" style="left:180px;width:30.6px;text-align:center;top:287.71px;font-size:6.6px;line-height:6.6px;color:#4a4a4a">Line</div>
<div style="position:absolute;left:258px;top:96.6px;width:606px;height:444px;background:#f8f8f8;"></div>
<div style="position:absolute;left:258px;top:97px;width:604px;height:20px;box-sizing:border-box;border:0.8px solid #e4e4e4;border-radius:1px;background:#fcfcfa;"></div>
<svg style="position:absolute;left:262.8px;top:103.6px" width="7" height="7.2" viewBox="0 0 7 7.2"><rect x="0.2" y="0" width="1.2" height="7.2" fill="#3e3e3c"/><rect x="2.9" y="0" width="1.2" height="7.2" fill="#3e3e3c"/><rect x="5.6" y="0" width="1.2" height="7.2" fill="#3e3e3c"/></svg>
<div class="t" style="left:275.00px;top:104.73px;font-size:6.7px;line-height:6.7px;font-weight:400;color:#14223b;font-style:normal;">Columns</div>
<div style="position:absolute;left:313.7px;top:100.7px;width:80.2px;height:13.5px;background:#e7f3e1;border-radius:3px;"></div>
<div class="t" style="left:317.50px;top:104.56px;font-size:6.9px;line-height:6.9px;font-weight:400;color:#4a5a4a;font-style:normal;">SUM(Profit)</div>
<div style="position:absolute;left:258px;top:119px;width:604px;height:20px;box-sizing:border-box;border:0.8px solid #e4e4e4;border-radius:1px;background:#fcfcfa;"></div>
<svg style="position:absolute;left:262.8px;top:126.3px" width="7.5" height="6" viewBox="0 0 7.5 6"><rect x="0" y="0" width="7.5" height="1.1" fill="#3e3e3c"/><rect x="0" y="2.45" width="7.5" height="1.1" fill="#3e3e3c"/><rect x="0" y="4.9" width="7.5" height="1.1" fill="#3e3e3c"/></svg>
<div class="t" style="left:275.00px;top:127.13px;font-size:6.7px;line-height:6.7px;font-weight:400;color:#14223b;font-style:normal;">Rows</div>
<div style="position:absolute;left:313.7px;top:122.7px;width:80.2px;height:13.6px;background:#e8f1fc;border-radius:3px;"></div>
<div class="t" style="left:317.50px;top:126.96px;font-size:6.9px;line-height:6.9px;font-weight:400;color:#1146b0;font-style:normal;">Region</div>
<svg style="position:absolute;left:383px;top:125.8px" width="5.4" height="8.2" viewBox="0 0 5.4 8.2"><path d="M2.7 2.5 L2.7 8.2" stroke="#0b3f8a" stroke-width="1.2" fill="none"/><path d="M0.2 3.2 L2.7 0.2 L5.2 3.2 Z" fill="#0b3f8a"/></svg>
<div style="position:absolute;left:258px;top:141px;width:604px;height:400px;box-sizing:border-box;border:0.8px solid #e4e4e4;border-radius:1px;background:#fcfcfa;"></div>
<div class="t" style="left:266.80px;top:149.10px;font-size:6.5px;line-height:6.5px;font-weight:700;color:#222;font-style:normal;">Region</div>
<div style="position:absolute;left:290.2px;top:160px;width:120.00599999999999px;height:9px;box-sizing:border-box;background:#4a90f5;border:0.7px solid #3484f7;"></div>
<div class="t" style="left:230px;width:59.2px;text-align:right;top:162.14px;font-size:6.8px;line-height:6.8px;color:#333">Central</div>
<div style="position:absolute;left:290.2px;top:172.6px;width:225.94050000000001px;height:9px;box-sizing:border-box;background:#4a90f5;border:0.7px solid #3484f7;"></div>
<div class="t" style="left:230px;width:59.2px;text-align:right;top:174.74px;font-size:6.8px;line-height:6.8px;color:#333">South</div>
<div style="position:absolute;left:290.2px;top:185.2px;width:503.38800000000003px;height:9px;box-sizing:border-box;background:#4a90f5;border:0.7px solid #3484f7;"></div>
<div class="t" style="left:230px;width:59.2px;text-align:right;top:187.34px;font-size:6.8px;line-height:6.8px;color:#333">West</div>
<div style="position:absolute;left:290.2px;top:198.2px;width:556.7535px;height:9px;box-sizing:border-box;background:#4a90f5;border:0.7px solid #3484f7;"></div>
<div class="t" style="left:230px;width:59.2px;text-align:right;top:200.34px;font-size:6.8px;line-height:6.8px;color:#333">East</div>
<div style="position:absolute;left:290.2px;top:209px;width:567.2px;height:0.8px;background:#d8d8d8;"></div>
<div style="position:absolute;left:289.9px;top:209.5px;width:0.6px;height:2.2px;background:#d0d0d0;"></div>
<div class="t" style="left:290.60px;top:214.81px;font-size:6.6px;line-height:6.6px;font-weight:400;color:#3e3e3c;font-style:normal;">0</div>
<div style="position:absolute;left:343.0px;top:209.5px;width:0.6px;height:2.2px;background:#d0d0d0;"></div>
<div class="t" style="left:322.8px;width:40px;text-align:center;top:215.11px;font-size:6.6px;line-height:6.6px;color:#3e3e3c">10K</div>
<div style="position:absolute;left:396.09999999999997px;top:209.5px;width:0.6px;height:2.2px;background:#d0d0d0;"></div>
<div class="t" style="left:375.9px;width:40px;text-align:center;top:215.11px;font-size:6.6px;line-height:6.6px;color:#3e3e3c">20K</div>
<div style="position:absolute;left:449.2px;top:209.5px;width:0.6px;height:2.2px;background:#d0d0d0;"></div>
<div class="t" style="left:429.0px;width:40px;text-align:center;top:215.11px;font-size:6.6px;line-height:6.6px;color:#3e3e3c">30K</div>
<div style="position:absolute;left:502.3px;top:209.5px;width:0.6px;height:2.2px;background:#d0d0d0;"></div>
<div class="t" style="left:482.1px;width:40px;text-align:center;top:215.11px;font-size:6.6px;line-height:6.6px;color:#3e3e3c">40K</div>
<div style="position:absolute;left:555.4000000000001px;top:209.5px;width:0.6px;height:2.2px;background:#d0d0d0;"></div>
<div class="t" style="left:535.2px;width:40px;text-align:center;top:215.11px;font-size:6.6px;line-height:6.6px;color:#3e3e3c">50K</div>
<div style="position:absolute;left:608.5px;top:209.5px;width:0.6px;height:2.2px;background:#d0d0d0;"></div>
<div class="t" style="left:588.3px;width:40px;text-align:center;top:215.11px;font-size:6.6px;line-height:6.6px;color:#3e3e3c">60K</div>
<div style="position:absolute;left:661.6px;top:209.5px;width:0.6px;height:2.2px;background:#d0d0d0;"></div>
<div class="t" style="left:641.4px;width:40px;text-align:center;top:215.11px;font-size:6.6px;line-height:6.6px;color:#3e3e3c">70K</div>
<div style="position:absolute;left:714.7px;top:209.5px;width:0.6px;height:2.2px;background:#d0d0d0;"></div>
<div class="t" style="left:694.5px;width:40px;text-align:center;top:215.11px;font-size:6.6px;line-height:6.6px;color:#3e3e3c">80K</div>
<div style="position:absolute;left:767.8000000000001px;top:209.5px;width:0.6px;height:2.2px;background:#d0d0d0;"></div>
<div class="t" style="left:747.6px;width:40px;text-align:center;top:215.11px;font-size:6.6px;line-height:6.6px;color:#3e3e3c">90K</div>
<div style="position:absolute;left:820.9000000000001px;top:209.5px;width:0.6px;height:2.2px;background:#d0d0d0;"></div>
<div class="t" style="left:800.7px;width:40px;text-align:center;top:215.11px;font-size:6.6px;line-height:6.6px;color:#3e3e3c">100K</div>
<div class="t" style="left:552.60px;top:226.39px;font-size:6.75px;line-height:6.75px;font-weight:700;color:#222;font-style:normal;">Sum of Profit</div>
<svg style="position:absolute;left:421.6px;top:397.4px" width="8" height="12" viewBox="0 0 8 12"><path d="M0.5 0.5 L0.5 9.2 L2.5 7.3 L4 10.6 L5.4 10 L4 6.8 L6.8 6.7 Z" fill="#000" stroke="#fff" stroke-width="0.5"/></svg>
</div></body></html>
